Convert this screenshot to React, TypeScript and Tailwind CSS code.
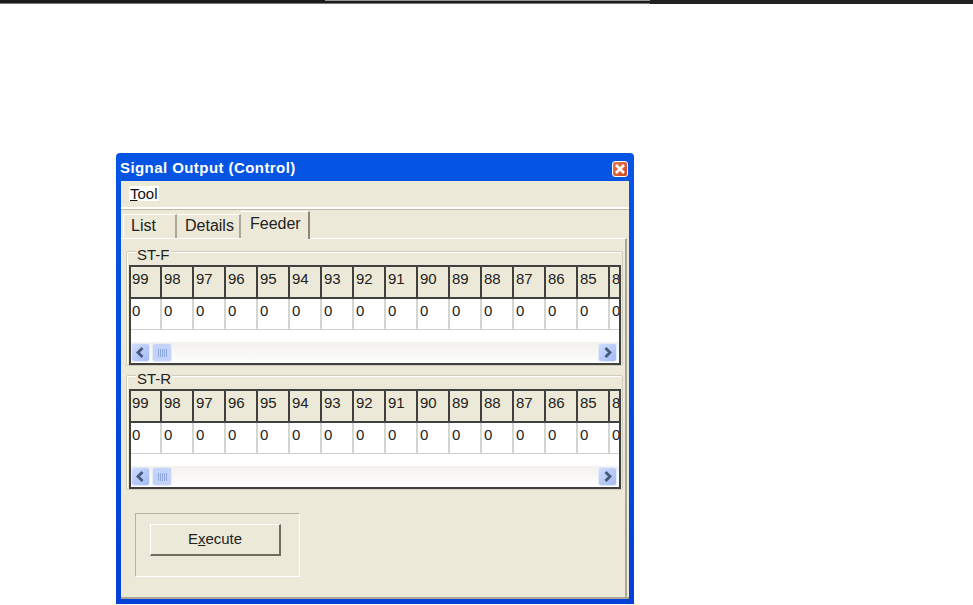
const cols = [99, 98, 97, 96, 95, 94, 93, 92, 91, 90, 89, 88, 87, 86, 85, 84]

function ArrowBtn({ dir }: { dir: 'left' | 'right' }) {
  return (
    <div className="w-[19px] h-[19px] shrink-0 rounded-[3px] border border-[#e4ebfd] bg-gradient-to-br from-[#cfdcfc] to-[#a3bbf4] flex items-center justify-center">
      <svg width="11" height="11" viewBox="0 0 11 11" fill="none">
        <path
          d={dir === 'left' ? 'M7.5 1 3 5.5 7.5 10' : 'M3.5 1 8 5.5 3.5 10'}
          stroke="#46597d"
          strokeWidth="2.8"
        />
      </svg>
    </div>
  )
}

function GridPanel({ title }: { title: string }) {
  return (
    <div className="relative ml-[5px] w-[497px] h-[115px] border border-[#cfcdbc] rounded-[2px] pt-[13px] px-[2px] shadow-[inset_1px_1px_0_#fff]">
      <span className="absolute left-[9px] top-[-5px] bg-[#ece9d8] px-[1px] leading-[15px] text-[#222]">{title}</span>
      <div className="w-[492px] h-[100px] border-2 border-[#404040] bg-white flex flex-col overflow-hidden">
        <div className="flex h-[32px] shrink-0 bg-[#ece9d8] border-b-2 border-[#404040]">
          {cols.map((c) => (
            <div
              key={c}
              className="w-[32px] first:w-[31px] last:w-[13px] shrink-0 border-r-2 last:border-r-0 border-[#404040] pl-[2px] first:pl-[1px] pt-[4px] leading-[16px] text-[#222] overflow-hidden"
            >
              {c}
            </div>
          ))}
        </div>
        <div className="flex h-[31px] shrink-0 border-b border-[#d0d0d0]">
          {cols.map((c) => (
            <div
              key={c}
              className="w-[32px] first:w-[31px] last:w-[13px] shrink-0 border-r-2 last:border-r-0 border-[#d4d4d4] pl-[2px] first:pl-[1px] pt-[4px] leading-[16px] text-[#222] overflow-hidden"
            >
              0
            </div>
          ))}
        </div>
        <div className="h-[12px] shrink-0" />
        <div className="h-[21px] flex items-end gap-[2px] pr-[2px] pb-[1px] bg-gradient-to-b from-[#f3f1ec] to-[#fefefe]">
          <ArrowBtn dir="left" />
          <div className="w-[20px] h-[19px] rounded-[3px] border border-[#e4ebfd] bg-[#c3d3fa] flex items-center justify-center">
            <div className="w-[9px] h-[8px] bg-[repeating-linear-gradient(90deg,#8fa8e0_0,#8fa8e0_1px,transparent_1px,transparent_2px)]" />
          </div>
          <div className="flex-1" />
          <ArrowBtn dir="right" />
        </div>
      </div>
    </div>
  )
}

export default function App() {
  return (
    <div className="w-[973px] h-[605px] bg-white overflow-hidden font-['Liberation_Sans',Arial,sans-serif] text-[15px]">
      <div className="h-[4px] flex">
        <div className="w-[325px] bg-[#1c1c1c] border-b border-[#777]" />
        <div className="w-[325px] bg-[#1c1c1c] border-t border-b border-t-[#999] border-b-[#777]" />
        <div className="flex-1 bg-[#222]" />
      </div>

      <div className="ml-[116px] mt-[149px] w-[518px] h-[451px] rounded-t-[4px] px-[5px] pb-[5px] flex flex-col bg-gradient-to-b from-[#0555e4] to-[#0340d8]">
        {/* Title bar */}
        <div className="h-[28px] shrink-0 flex items-center justify-between -mx-[1px] pt-[3px]">
          <span className="text-white font-bold text-[15px] tracking-[0.43px]">Signal Output (Control)</span>
          <div className="w-[16px] h-[16px] mr-[2px] rounded-[3px] border border-white bg-gradient-to-br from-[#ea7a55] to-[#d0441d] flex items-center justify-center">
            <svg width="12" height="12" viewBox="0 0 12 12">
              <path d="M2 2 10 10M10 2 2 10" stroke="#fff" strokeWidth="2.6" />
            </svg>
          </div>
        </div>

        <div className="flex-1 bg-[#ece9d8] flex flex-col border-b-2 border-[#aca899]">
          {/* Menu */}
          <div className="h-[26px] shrink-0 pl-[8px] pt-[5px]">
            <span className="block w-fit bg-white h-[15px] leading-[15px] px-[1px] text-[#111]">
              <span className="underline">T</span>ool
            </span>
          </div>
          <div className="h-[3px] shrink-0 border-t-2 border-white bg-[#bdb9a8]" />

          {/* Tabs */}
          <div className="h-[28px] shrink-0 pl-[2px] flex items-end text-[16px]">
            <div className="w-[54px] h-[24px] border-t border-l border-white border-r-2 border-r-[#aca899] pl-[7px] pt-[3px] leading-[16px] text-[#222]">List</div>
            <div className="w-[64px] h-[24px] border-t border-white border-r-2 border-r-[#aca899] pl-[8px] pt-[3px] leading-[16px] text-[#222]">Details</div>
            <div className="relative z-10 w-[69px] h-[28px] mb-[-1px] border-t border-white border-r-2 border-r-[#8a8778] pl-[9px] pt-[4px] leading-[16px] text-[#222] bg-[#ece9d8]">Feeder</div>
          </div>

          {/* Pane */}
          <div className="flex-1 mr-[2px] border-t border-white border-r-2 border-r-[#aca899] flex flex-col">
            <div className="mt-[12px]">
              <GridPanel title="ST-F" />
            </div>
            <div className="mt-[9px]">
              <GridPanel title="ST-R" />
            </div>
            <div className="ml-[14px] mt-[23px] w-[165px] h-[64px] border border-[#b5b2a2] border-r-white border-b-white pl-[14px] pt-[10px]">
              <div className="w-[131px] h-[32px] border-t border-l border-white border-r-2 border-b-2 border-r-[#6f6d62] border-b-[#6f6d62] flex items-center justify-center text-[#222]">
                <span>
                  E<span className="underline">x</span>ecute
                </span>
              </div>
            </div>
          </div>
        </div>
      </div>
    </div>
  )
}
